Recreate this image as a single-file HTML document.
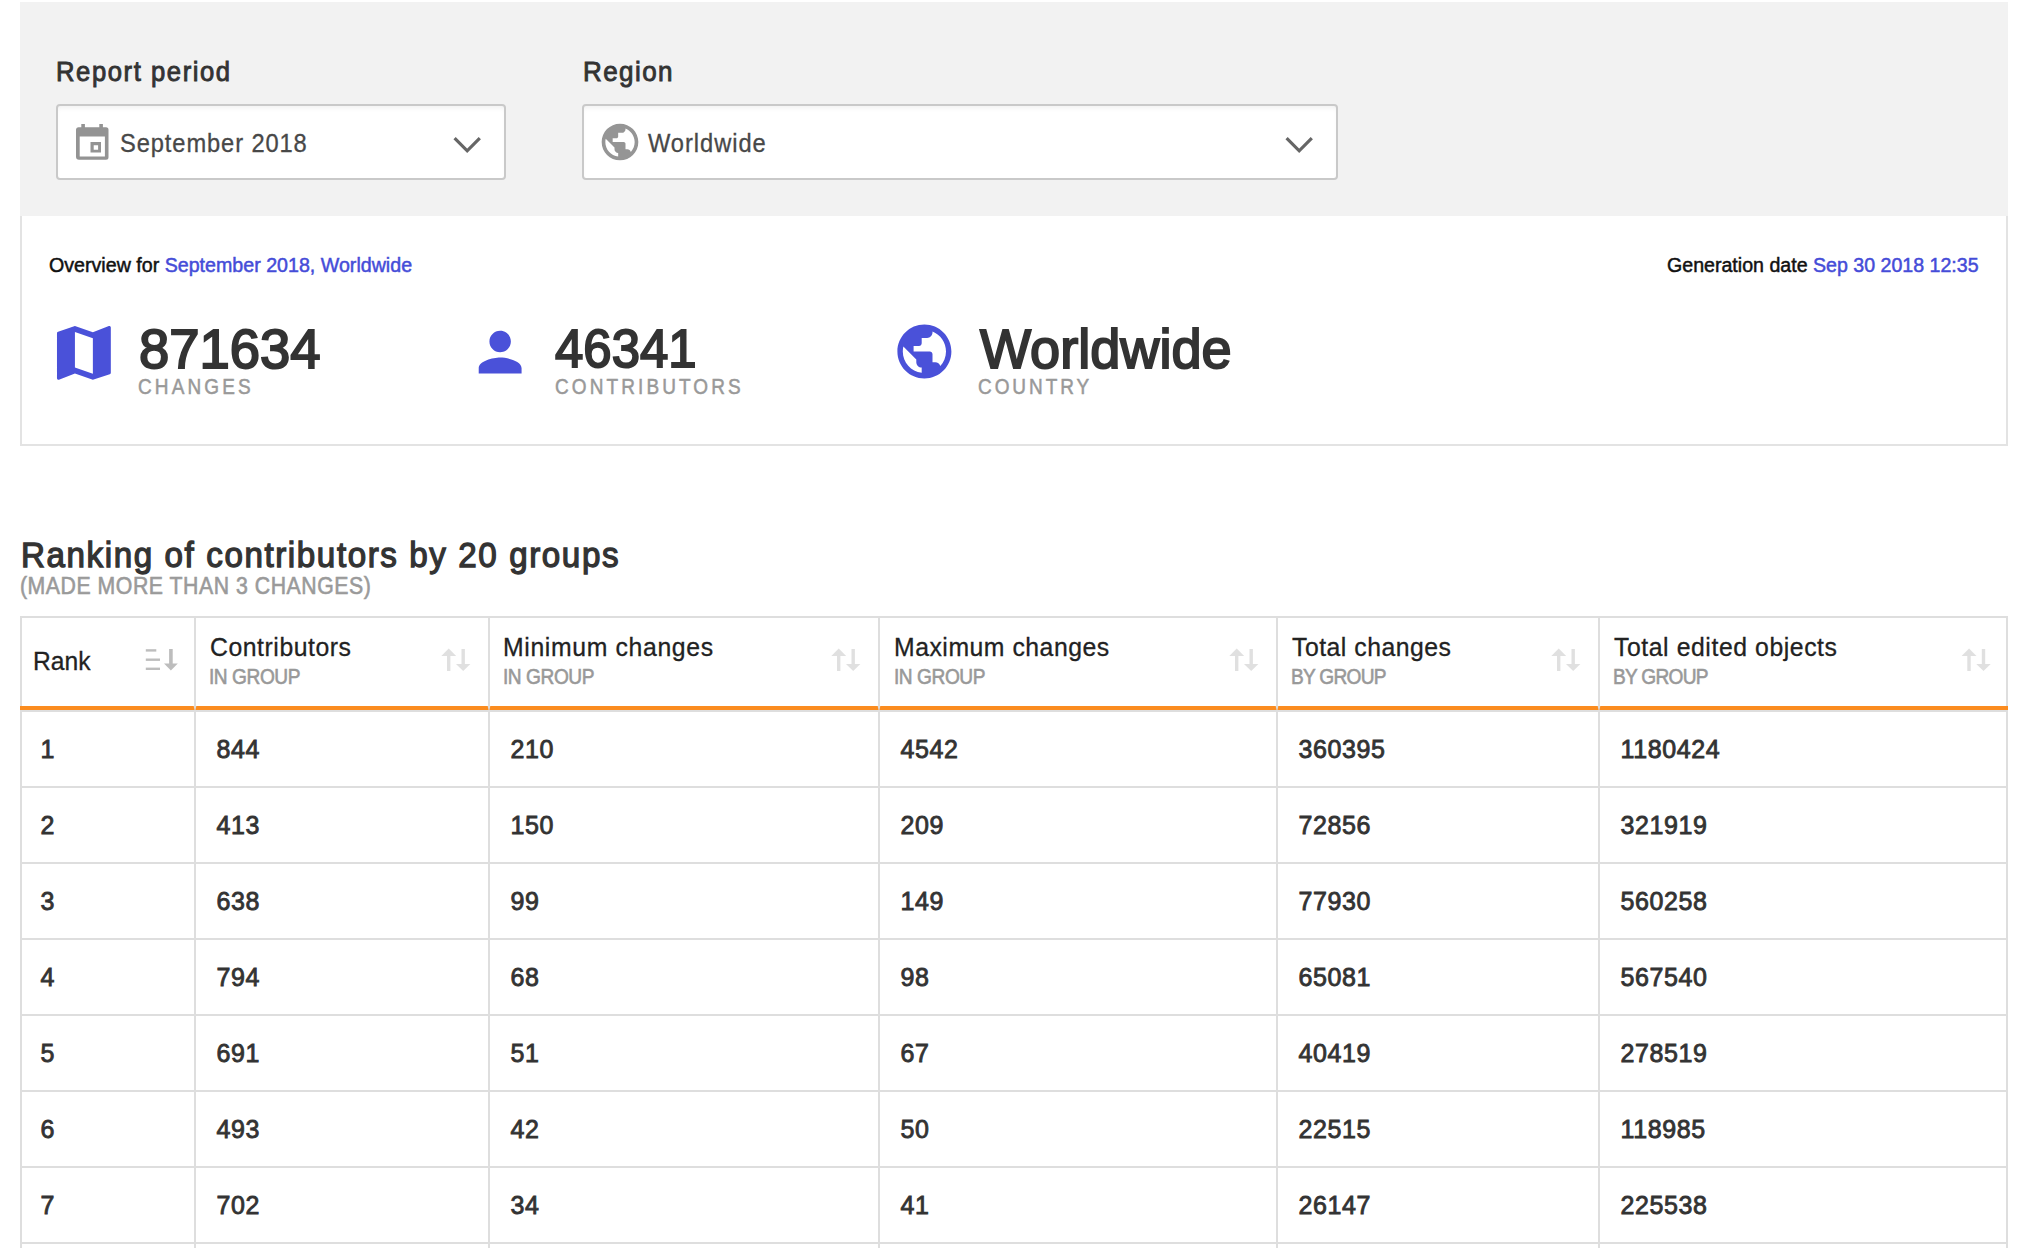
<!DOCTYPE html>
<html><head><meta charset="utf-8"><title>Ranking</title>
<style>
html,body{margin:0;padding:0;background:#fff;}
body{width:2028px;height:1248px;overflow:hidden;position:relative;font-family:"Liberation Sans", sans-serif;}
.t{position:absolute;white-space:nowrap;font-family:"Liberation Sans", sans-serif;}
.c{font-size:25px;line-height:25px;color:#333;-webkit-text-stroke:0.85px #333;letter-spacing:0.6px;}
.abs{position:absolute;}
.ln{position:absolute;background:#dedede;}
.filters{position:absolute;left:20px;top:2px;width:1988px;height:214px;background:#f2f2f2;}
.dd{position:absolute;top:104px;height:72px;border:2px solid #c9c9c9;border-radius:4px;background:#fff;box-shadow:inset 0 4px 5px -2px rgba(0,0,0,0.06);}
.card{position:absolute;left:20px;top:216px;width:1984px;height:228px;border:2px solid #e3e3e3;border-top:none;background:#fff;}
</style></head><body>
<div class="filters"></div>
<div class="dd" style="left:56px;width:446px"></div>
<div class="dd" style="left:582px;width:752px"></div>
<div class="card"></div>
<svg class="abs" style="left:0;top:0" width="600" height="200"><g fill="#939393"><path fill-rule="evenodd" d="M79 127.3h27a2.5 2.5 0 0 1 2.5 2.5v27.4a2.5 2.5 0 0 1-2.5 2.5h-27a3 3 0 0 1-3-3v-26.9a2.5 2.5 0 0 1 3-2.5zM79.7 136.5v20h25.2v-20z"/><rect x="81.3" y="124" width="3.6" height="4"/><rect x="99.3" y="124" width="3.6" height="4"/><path fill-rule="evenodd" d="M90.5 142h10.5v10.5h-10.5zM93.7 145.3v4.4h4.4v-4.4z"/></g></svg>
<svg class="abs" style="left:0;top:0" width="1400" height="200"><g fill="none" stroke="#666" stroke-width="3.2" stroke-linecap="butt"><polyline points="454.6,138.2 467.2,150.8 479.8,138.2"/><polyline points="1286.6,138.2 1299.2,150.8 1311.8,138.2"/></g></svg>
<svg class="abs" style="left:48px;top:317.2px" width="71.8" height="71.8" viewBox="0 0 24 24"><path fill="#4a51d9" d="M20.5 3l-.16.03L15 5.1 9 3 3.36 4.9c-.21.07-.36.25-.36.48V20.5c0 .28.22.5.5.5l.16-.03L9 18.9l6 2.1 5.64-1.9c.21-.07.36-.25.36-.48V3.5c0-.28-.22-.5-.5-.5zM15 19l-6-2.11V5l6 2.11V19z"/></svg><svg class="abs" style="left:467.7px;top:319.5px" width="64.3" height="64.3" viewBox="0 0 24 24"><path fill="#4a51d9" d="M12 12c2.21 0 4-1.79 4-4s-1.79-4-4-4-4 1.79-4 4 1.79 4 4 4zm0 2c-2.67 0-8 1.34-8 4v2h16v-2c0-2.66-5.33-4-8-4z"/></svg><svg class="abs" style="left:891.5px;top:319.4px" width="64.8" height="64.8" viewBox="0 0 24 24"><path fill="#4a51d9" d="M12 2C6.48 2 2 6.48 2 12s4.48 10 10 10 10-4.48 10-10S17.52 2 12 2zm-1 17.93c-3.95-.49-7-3.85-7-7.93 0-.62.08-1.21.21-1.79L9 15v1c0 1.1.9 2 2 2v1.93zm6.9-2.54c-.26-.81-1-1.39-1.9-1.39h-1v-3c0-.55-.45-1-1-1H8v-2h2c.55 0 1-.45 1-1V7h2c1.1 0 2-.9 2-2v-.41c2.93 1.19 5 4.06 5 7.41 0 2.08-.8 3.97-2.1 5.39z"/></svg><svg class="abs" style="left:597.9px;top:119.8px" width="44" height="44" viewBox="0 0 24 24"><path fill="#959595" d="M12 2C6.48 2 2 6.48 2 12s4.48 10 10 10 10-4.48 10-10S17.52 2 12 2zm-1 17.93c-3.95-.49-7-3.85-7-7.93 0-.62.08-1.21.21-1.79L9 15v1c0 1.1.9 2 2 2v1.93zm6.9-2.54c-.26-.81-1-1.39-1.9-1.39h-1v-3c0-.55-.45-1-1-1H8v-2h2c.55 0 1-.45 1-1V7h2c1.1 0 2-.9 2-2v-.41c2.93 1.19 5 4.06 5 7.41 0 2.08-.8 3.97-2.1 5.39z"/></svg>
<div class="ln" style="left:20px;top:616px;width:2px;height:632px"></div><div class="ln" style="left:194px;top:616px;width:2px;height:632px"></div><div class="ln" style="left:488px;top:616px;width:2px;height:632px"></div><div class="ln" style="left:878px;top:616px;width:2px;height:632px"></div><div class="ln" style="left:1276px;top:616px;width:2px;height:632px"></div><div class="ln" style="left:1598px;top:616px;width:2px;height:632px"></div><div class="ln" style="left:2006px;top:616px;width:2px;height:632px"></div><div class="ln" style="left:20px;top:616px;width:1988px;height:2px"></div><div class="ln" style="left:20px;top:710px;width:1988px;height:2px"></div><div class="ln" style="left:20px;top:786px;width:1988px;height:2px"></div><div class="ln" style="left:20px;top:862px;width:1988px;height:2px"></div><div class="ln" style="left:20px;top:938px;width:1988px;height:2px"></div><div class="ln" style="left:20px;top:1014px;width:1988px;height:2px"></div><div class="ln" style="left:20px;top:1090px;width:1988px;height:2px"></div><div class="ln" style="left:20px;top:1166px;width:1988px;height:2px"></div><div class="ln" style="left:20px;top:1242px;width:1988px;height:2px"></div><div style="position:absolute;left:20px;top:706px;width:1988px;height:4px;background:#fb8c1f"></div>
<svg class="abs" width="2028" height="1248" style="left:0;top:0"><g fill="#bdbdbd"><rect x="145.8" y="649.2" width="10.5" height="2.4"/><rect x="145.8" y="658.5" width="14.2" height="2.4"/><rect x="145.8" y="667.6" width="14.2" height="2.4"/><rect x="169.1" y="649" width="3.6" height="16"/><polygon points="164,663.5 177.8,663.5 170.9,670.5"/></g><g fill="#e0e0e0"><polygon points="441.3,656 448.75,648.6 456.2,656" /><rect x="447" y="655" width="3.4" height="16" /><rect x="461.5" y="649" width="3.4" height="16" /><polygon points="456,663.9 463.2,671.1 470.4,663.9" /><polygon points="831.3,656 838.75,648.6 846.2,656" /><rect x="837" y="655" width="3.4" height="16" /><rect x="851.5" y="649" width="3.4" height="16" /><polygon points="846,663.9 853.2,671.1 860.4,663.9" /><polygon points="1229.3,656 1236.75,648.6 1244.2,656" /><rect x="1235" y="655" width="3.4" height="16" /><rect x="1249.5" y="649" width="3.4" height="16" /><polygon points="1244,663.9 1251.2,671.1 1258.4,663.9" /><polygon points="1551.3,656 1558.75,648.6 1566.2,656" /><rect x="1557" y="655" width="3.4" height="16" /><rect x="1571.5" y="649" width="3.4" height="16" /><polygon points="1566,663.9 1573.2,671.1 1580.4,663.9" /><polygon points="1961.6,656 1969.05,648.6 1976.5,656" /><rect x="1967.3" y="655" width="3.4" height="16" /><rect x="1981.8" y="649" width="3.4" height="16" /><polygon points="1976.3,663.9 1983.5,671.1 1990.7,663.9" /></g><g fill="#dcdcdc"><polygon points="193.7,706 196.3,706 195.5,710 194.5,710"/><polygon points="487.7,706 490.3,706 489.5,710 488.5,710"/><polygon points="877.7,706 880.3,706 879.5,710 878.5,710"/><polygon points="1275.7,706 1278.3,706 1277.5,710 1276.5,710"/><polygon points="1597.7,706 1600.3,706 1599.5,710 1598.5,710"/></g></svg>
<div class="t" style="left:55.93px;top:58.73px;font-size:26.96px;line-height:26.96px;color:#333;letter-spacing:1.661px;transform:scaleX(0.9500);transform-origin:0 0;-webkit-text-stroke:0.9px currentColor">Report period</div><div class="t" style="left:583.03px;top:57.57px;font-size:27.39px;line-height:27.39px;color:#333;letter-spacing:1.494px;transform:scaleX(0.9500);transform-origin:0 0;-webkit-text-stroke:0.9px currentColor">Region</div><div class="t" style="left:120.09px;top:130.71px;font-size:24.93px;line-height:24.93px;color:#484848;letter-spacing:0.949px;transform:scaleX(0.9500);transform-origin:0 0;-webkit-text-stroke:0.3px currentColor">September 2018</div><div class="t" style="left:647.94px;top:130.71px;font-size:24.93px;line-height:24.93px;color:#484848;letter-spacing:1.006px;transform:scaleX(0.9500);transform-origin:0 0;-webkit-text-stroke:0.3px currentColor">Worldwide</div><div class="t" style="left:49.14px;top:254.51px;font-size:20.58px;line-height:20.58px;color:#111;transform:scaleX(0.9542);transform-origin:0 0;-webkit-text-stroke:0.5px currentColor">Overview for <span style="color:#454cd8">September 2018, Worldwide</span></div><div class="t" style="left:1667.39px;top:254.51px;font-size:20.58px;line-height:20.58px;color:#111;transform:scaleX(0.9522);transform-origin:0 0;-webkit-text-stroke:0.5px currentColor">Generation date <span style="color:#454cd8">Sep 30 2018 12:35</span></div><div class="t" style="left:138.71px;top:321.62px;font-size:54.74px;line-height:54.74px;color:#333;transform:scaleX(0.9945);transform-origin:0 0;-webkit-text-stroke:2.0px currentColor">871634</div><div class="t" style="left:555.40px;top:320.54px;font-size:54.01px;line-height:54.01px;color:#333;transform:scaleX(0.9428);transform-origin:0 0;-webkit-text-stroke:2.0px currentColor">46341</div><div class="t" style="left:979.98px;top:321.54px;font-size:55.07px;line-height:55.07px;color:#333;transform:scaleX(0.9828);transform-origin:0 0;-webkit-text-stroke:2.0px currentColor">Worldwide</div><div class="t" style="left:138.34px;top:375.70px;font-size:21.59px;line-height:21.59px;color:#999;letter-spacing:3.557px;transform:scaleX(0.8800);transform-origin:0 0;-webkit-text-stroke:0.5px currentColor">CHANGES</div><div class="t" style="left:554.74px;top:375.70px;font-size:21.59px;line-height:21.59px;color:#999;letter-spacing:3.525px;transform:scaleX(0.8800);transform-origin:0 0;-webkit-text-stroke:0.5px currentColor">CONTRIBUTORS</div><div class="t" style="left:978.34px;top:375.70px;font-size:21.59px;line-height:21.59px;color:#999;letter-spacing:3.341px;transform:scaleX(0.8800);transform-origin:0 0;-webkit-text-stroke:0.5px currentColor">COUNTRY</div><div class="t" style="left:21.32px;top:537.51px;font-size:34.93px;line-height:34.93px;color:#333;letter-spacing:1.664px;transform:scaleX(0.9500);transform-origin:0 0;-webkit-text-stroke:1.3px currentColor">Ranking of contributors by 20 groups</div><div class="t" style="left:20.37px;top:574.62px;font-size:23.62px;line-height:23.62px;color:#9a9a9a;letter-spacing:0.600px;transform:scaleX(0.9000);transform-origin:0 0;-webkit-text-stroke:0.6px currentColor">(MADE MORE THAN 3 CHANGES)</div><div class="t" style="left:33.11px;top:648.62px;font-size:25.51px;line-height:25.51px;color:#222;transform:scaleX(0.9659);transform-origin:0 0;-webkit-text-stroke:0.3px currentColor">Rank</div><div class="t" style="left:209.79px;top:633.67px;font-size:26.09px;line-height:26.09px;color:#222;letter-spacing:0.580px;transform:scaleX(0.9500);transform-origin:0 0;-webkit-text-stroke:0.3px currentColor">Contributors</div><div class="t" style="left:209.10px;top:665.52px;font-size:21.74px;line-height:21.74px;color:#999;letter-spacing:-0.504px;transform:scaleX(0.8800);transform-origin:0 0;-webkit-text-stroke:0.6px currentColor">IN GROUP</div><div class="t" style="left:502.84px;top:633.67px;font-size:26.09px;line-height:26.09px;color:#222;letter-spacing:0.679px;transform:scaleX(0.9500);transform-origin:0 0;-webkit-text-stroke:0.3px currentColor">Minimum changes</div><div class="t" style="left:503.10px;top:665.52px;font-size:21.74px;line-height:21.74px;color:#999;letter-spacing:-0.504px;transform:scaleX(0.8800);transform-origin:0 0;-webkit-text-stroke:0.6px currentColor">IN GROUP</div><div class="t" style="left:893.94px;top:633.67px;font-size:26.09px;line-height:26.09px;color:#222;letter-spacing:0.545px;transform:scaleX(0.9500);transform-origin:0 0;-webkit-text-stroke:0.3px currentColor">Maximum changes</div><div class="t" style="left:894.20px;top:665.52px;font-size:21.74px;line-height:21.74px;color:#999;letter-spacing:-0.504px;transform:scaleX(0.8800);transform-origin:0 0;-webkit-text-stroke:0.6px currentColor">IN GROUP</div><div class="t" style="left:1292.14px;top:633.67px;font-size:26.09px;line-height:26.09px;color:#222;letter-spacing:0.533px;transform:scaleX(0.9500);transform-origin:0 0;-webkit-text-stroke:0.3px currentColor">Total changes</div><div class="t" style="left:1291.38px;top:665.52px;font-size:21.74px;line-height:21.74px;color:#999;letter-spacing:-0.824px;transform:scaleX(0.8800);transform-origin:0 0;-webkit-text-stroke:0.6px currentColor">BY GROUP</div><div class="t" style="left:1614.14px;top:633.67px;font-size:26.09px;line-height:26.09px;color:#222;letter-spacing:0.602px;transform:scaleX(0.9500);transform-origin:0 0;-webkit-text-stroke:0.3px currentColor">Total edited objects</div><div class="t" style="left:1613.38px;top:665.52px;font-size:21.74px;line-height:21.74px;color:#999;letter-spacing:-0.824px;transform:scaleX(0.8800);transform-origin:0 0;-webkit-text-stroke:0.6px currentColor">BY GROUP</div>
<div class="t c" style="left:40.5px;top:736.73px">1</div><div class="t c" style="left:216.5px;top:736.73px">844</div><div class="t c" style="left:510.5px;top:736.73px">210</div><div class="t c" style="left:900.5px;top:736.73px">4542</div><div class="t c" style="left:1298.5px;top:736.73px">360395</div><div class="t c" style="left:1620.5px;top:736.73px">1180424</div><div class="t c" style="left:40.5px;top:812.73px">2</div><div class="t c" style="left:216.5px;top:812.73px">413</div><div class="t c" style="left:510.5px;top:812.73px">150</div><div class="t c" style="left:900.5px;top:812.73px">209</div><div class="t c" style="left:1298.5px;top:812.73px">72856</div><div class="t c" style="left:1620.5px;top:812.73px">321919</div><div class="t c" style="left:40.5px;top:888.73px">3</div><div class="t c" style="left:216.5px;top:888.73px">638</div><div class="t c" style="left:510.5px;top:888.73px">99</div><div class="t c" style="left:900.5px;top:888.73px">149</div><div class="t c" style="left:1298.5px;top:888.73px">77930</div><div class="t c" style="left:1620.5px;top:888.73px">560258</div><div class="t c" style="left:40.5px;top:964.73px">4</div><div class="t c" style="left:216.5px;top:964.73px">794</div><div class="t c" style="left:510.5px;top:964.73px">68</div><div class="t c" style="left:900.5px;top:964.73px">98</div><div class="t c" style="left:1298.5px;top:964.73px">65081</div><div class="t c" style="left:1620.5px;top:964.73px">567540</div><div class="t c" style="left:40.5px;top:1040.73px">5</div><div class="t c" style="left:216.5px;top:1040.73px">691</div><div class="t c" style="left:510.5px;top:1040.73px">51</div><div class="t c" style="left:900.5px;top:1040.73px">67</div><div class="t c" style="left:1298.5px;top:1040.73px">40419</div><div class="t c" style="left:1620.5px;top:1040.73px">278519</div><div class="t c" style="left:40.5px;top:1116.73px">6</div><div class="t c" style="left:216.5px;top:1116.73px">493</div><div class="t c" style="left:510.5px;top:1116.73px">42</div><div class="t c" style="left:900.5px;top:1116.73px">50</div><div class="t c" style="left:1298.5px;top:1116.73px">22515</div><div class="t c" style="left:1620.5px;top:1116.73px">118985</div><div class="t c" style="left:40.5px;top:1192.73px">7</div><div class="t c" style="left:216.5px;top:1192.73px">702</div><div class="t c" style="left:510.5px;top:1192.73px">34</div><div class="t c" style="left:900.5px;top:1192.73px">41</div><div class="t c" style="left:1298.5px;top:1192.73px">26147</div><div class="t c" style="left:1620.5px;top:1192.73px">225538</div>
</body></html>
